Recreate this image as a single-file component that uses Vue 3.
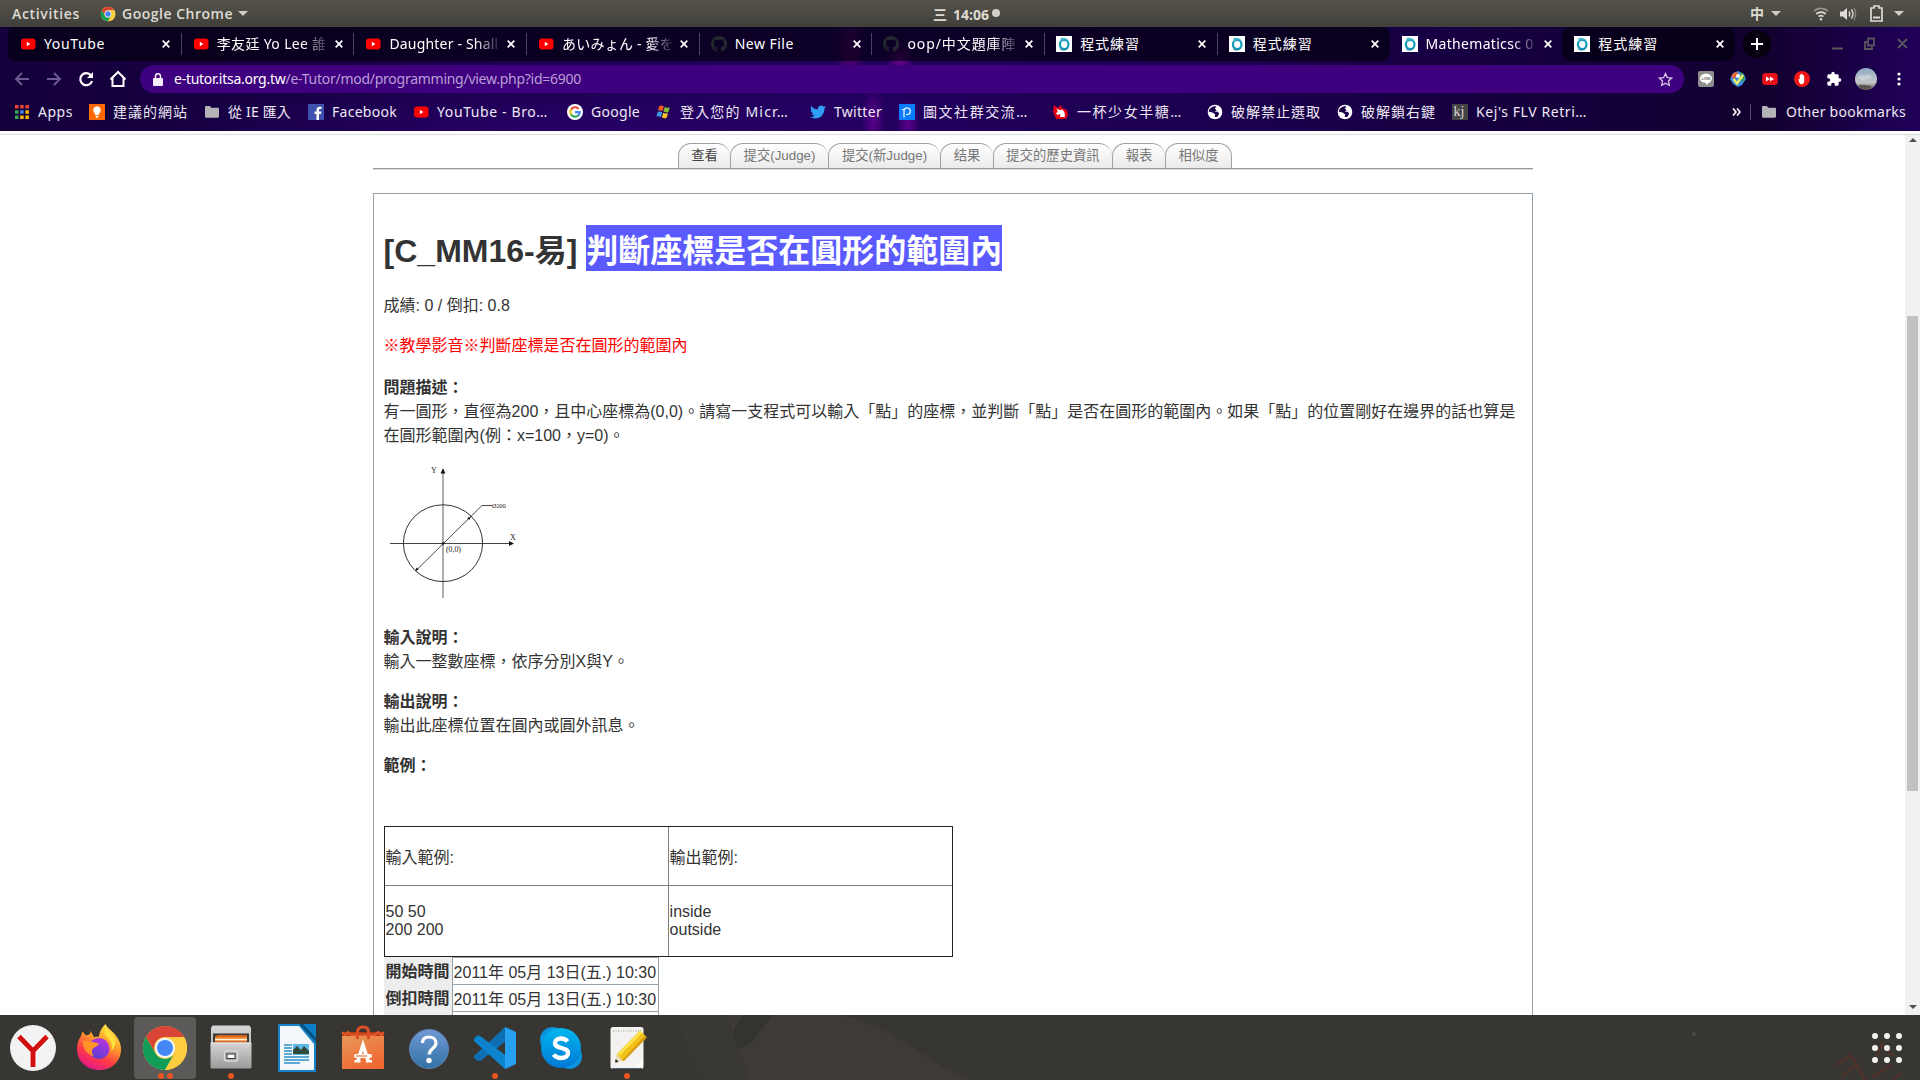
<script setup>
// Spreads or tightens the letters of a label so that it takes the given width.
const vFit = {
  mounted(el, { value }) {
    if (!value) return
    const natural = el.getBoundingClientRect().width
    const count = [...el.textContent].length
    el.style.letterSpacing = (value - natural) / count + 'px'
  },
}

const tabs = [
  { icon: 'youtube', title: 'YouTube', fit: 61 },
  { icon: 'youtube', title: '李友廷 Yo Lee 誰', fit: 110, fade: true },
  { icon: 'youtube', title: 'Daughter - Shall', fit: 109, fade: true },
  { icon: 'youtube', title: 'あいみょん - 愛を', fit: 112, fade: true },
  { icon: 'github', title: 'New File', fit: 59 },
  { icon: 'github', title: 'oop/中文題庫陣', fit: 109, fade: true },
  { icon: 'itsa', title: '程式練習', fit: 60 },
  { icon: 'itsa', title: '程式練習', fit: 60 },
  { icon: 'itsa', title: 'Mathematicsc 0', fit: 108, fade: true, active: true },
  { icon: 'itsa', title: '程式練習', fit: 60 },
]

const bookmarks = [
  { icon: 'apps', title: 'Apps', fit: 35, width: 75 },
  { icon: 'bulb', title: '建議的網站', fit: 75, width: 115 },
  { icon: 'folder', title: '從 IE 匯入', fit: 63, width: 104 },
  { icon: 'facebook', title: 'Facebook', fit: 65, width: 105 },
  { icon: 'youtube', title: 'YouTube - Bro…', fit: 111, width: 154 },
  { icon: 'google', title: 'Google', fit: 49, width: 89 },
  { icon: 'windows', title: '登入您的 Micr…', fit: 109, width: 154 },
  { icon: 'twitter', title: 'Twitter', fit: 48, width: 89 },
  { icon: 'pixnet', title: '圖文社群交流…', fit: 106, width: 154 },
  { icon: 'unicorn', title: '一杯少女半糖…', fit: 106, width: 154 },
  { icon: 'globe', title: '破解禁止選取', fit: 90, width: 130 },
  { icon: 'globe', title: '破解鎖右鍵', fit: 75, width: 115 },
  { icon: 'kj', title: "Kej's FLV Retri…", fit: 111, width: 134 },
]

const pageTabs = [
  { title: '查看', width: 52, current: true },
  { title: '提交(Judge)', width: 98 },
  { title: '提交(新Judge)', width: 112 },
  { title: '结果', width: 53 },
  { title: '提交的歷史資訊', width: 119 },
  { title: '報表', width: 53 },
  { title: '相似度', width: 67 },
]

const dock = [
  { name: 'yandex', dots: 0 },
  { name: 'firefox', dots: 0 },
  { name: 'chrome', dots: 2, active: true },
  { name: 'files', dots: 1 },
  { name: 'writer', dots: 0 },
  { name: 'software', dots: 0 },
  { name: 'help', dots: 0 },
  { name: 'vscode', dots: 1 },
  { name: 'skype', dots: 0 },
  { name: 'notes', dots: 1 },
]
</script>

<template>
  <svg class="defs" width="0" height="0" aria-hidden="true">
    <defs>
      <linearGradient id="ffBody" x1="0.8" y1="0" x2="0.3" y2="1">
        <stop offset="0" stop-color="#fff04a" /><stop offset="0.4" stop-color="#ff9a28" />
        <stop offset="0.7" stop-color="#ff3b47" /><stop offset="1" stop-color="#e3158c" />
      </linearGradient>
      <linearGradient id="ffCore" x1="0.7" y1="0" x2="0.3" y2="1">
        <stop offset="0" stop-color="#b833e1" /><stop offset="1" stop-color="#5a3fd0" />
      </linearGradient>
      <linearGradient id="metal" x1="0" y1="0" x2="0" y2="1">
        <stop offset="0" stop-color="#d6d6d6" /><stop offset="1" stop-color="#9b9b9b" />
      </linearGradient>
      <linearGradient id="bag" x1="0" y1="0" x2="0.5" y2="1">
        <stop offset="0" stop-color="#e8975a" /><stop offset="1" stop-color="#f06a32" />
      </linearGradient>
      <linearGradient id="helpBlue" x1="0" y1="0" x2="0" y2="1">
        <stop offset="0" stop-color="#7098d4" /><stop offset="1" stop-color="#3372a6" />
      </linearGradient>
      <linearGradient id="skypeBlue" x1="0" y1="0" x2="0" y2="1">
        <stop offset="0" stop-color="#00b7f0" /><stop offset="1" stop-color="#0078d4" />
      </linearGradient>
      <linearGradient id="sky" x1="0" y1="0" x2="0" y2="1">
        <stop offset="0" stop-color="#8fa9c4" /><stop offset="0.65" stop-color="#c3c7c9" /><stop offset="1" stop-color="#5e554c" />
      </linearGradient>

      <symbol id="youtube" viewBox="0 0 16 16">
        <rect x="1" y="2.500" width="14.500" height="11" rx="3" fill="#f00" /><path d="M6.800 5.800v4.400L10.400 8z" fill="#fff" />
      </symbol>
      <symbol id="github" viewBox="0 0 16 16">
        <path fill="#24292e" d="M8 0C3.58 0 0 3.58 0 8c0 3.54 2.29 6.53 5.47 7.59.4.07.55-.17.55-.38v-1.49c-2.01.37-2.53-.49-2.69-.94-.09-.23-.48-.94-.82-1.13-.28-.15-.68-.52-.01-.53.63-.01 1.08.58 1.23.82.72 1.21 1.87.87 2.33.66.07-.52.28-.87.51-1.07-1.78-.2-3.64-.89-3.64-3.95 0-.87.31-1.59.82-2.15-.08-.2-.36-1.02.08-2.12 0 0 .67-.21 2.2.82.64-.18 1.32-.27 2-.27s1.36.09 2 .27c1.53-1.04 2.2-.82 2.2-.82.44 1.1.16 1.92.08 2.12.51.56.82 1.27.82 2.15 0 3.07-1.87 3.75-3.65 3.95.29.25.54.73.54 1.48v2.2c0 .21.15.46.55.38A8.01 8.01 0 0 0 16 8c0-4.42-3.58-8-8-8z" />
      </symbol>
      <symbol id="itsa" viewBox="0 0 16 16">
        <rect width="16" height="16" fill="#fff" />
        <ellipse cx="8.200" cy="8.500" rx="4.300" ry="4.500" fill="none" stroke="#169aba" stroke-width="2.200" />
        <path d="M4.500 2.200C7 1 11 2 12.500 4.500L8 3.600 4.500 6z" fill="#43b6cc" /><path d="M4.200 13c2.600 1.900 6 1.100 7.600-.9" stroke="#0b7793" fill="none" />
      </symbol>
      <symbol id="apps" viewBox="0 0 16 16">
        <path fill="#ea4335" d="M1 1h3.500v3.500H1zM6.200 1h3.500v3.500H6.200zM11.400 1h3.500v3.500h-3.500z" />
        <path fill="#34a853" d="M1 6.200h3.500v3.500H1zM1 11.400h3.500v3.500H1z" /><path fill="#4285f4" d="M6.200 6.200h3.500v3.500H6.200z" />
        <path fill="#fbbc05" d="M11.400 6.200h3.500v3.500h-3.500zM6.200 11.400h3.500v3.500H6.200zM11.400 11.400h3.500v3.500h-3.500z" />
      </symbol>
      <symbol id="bulb" viewBox="0 0 16 16">
        <rect width="16" height="16" fill="#ff6a00" /><path d="M8 2.200a4 4 0 0 0-2.200 7.200l.6 1.600h3.200l.6-1.600A4 4 0 0 0 8 2.200zM6.600 11.800h2.800v1L8 14.300l-1.400-1.500z" fill="#fff" />
      </symbol>
      <symbol id="folder" viewBox="0 0 16 16">
        <path d="M1 3.200C1 2.500 1.500 2 2.200 2h3.600l1.600 1.800h6.400c.7 0 1.200.5 1.200 1.200v7.600c0 .7-.5 1.200-1.200 1.200H2.200c-.7 0-1.200-.5-1.200-1.200z" fill="#b4b4b8" />
      </symbol>
      <symbol id="facebook" viewBox="0 0 16 16">
        <rect width="16" height="16" fill="#4052b0" /><path d="M11 16v-6h2l.4-2.400H11V6.200c0-.7.3-1.200 1.300-1.200h1.200V2.800c-2.900-.5-5 .3-5 3.100v1.700H6.500V10h2v6z" fill="#fff" />
      </symbol>
      <symbol id="google" viewBox="0 0 16 16">
        <circle cx="8" cy="8" r="8" fill="#fff" />
        <g fill="none" stroke-width="2.100"><path d="M11.600 4.900A4.700 4.700 0 0 0 4 5.600" stroke="#ea4335" /><path d="M4 5.600a4.700 4.700 0 0 0 0 4.800" stroke="#fbbc05" />
          <path d="M4 10.400a4.700 4.700 0 0 0 7 1.200" stroke="#34a853" /><path d="M11 11.600A4.700 4.700 0 0 0 12.700 8.100H8" stroke="#4285f4" /></g>
      </symbol>
      <symbol id="windows" viewBox="0 0 16 16">
        <path d="M3.200 2.200C5 1.200 6.400 1.600 7.800 2.500L6.500 7.200C5 6.300 3.600 6 1.900 6.900z" fill="#f25a22" />
        <path d="M8.800 3c1.500.8 3 1.100 5 .2l-1.400 4.700c-1.800.9-3.300.6-4.900-.3z" fill="#86c431" />
        <path d="M1.700 8c1.700-.9 3.200-.6 4.600.3L5 13c-1.500-.9-3-1.200-4.700-.4z" fill="#3f9ae8" />
        <path d="M7.200 8.800c1.500.8 3 1.200 4.900.3l-1.400 4.700c-1.700.9-3.300.6-4.800-.3z" fill="#fcc419" />
      </symbol>
      <symbol id="twitter" viewBox="0 0 24 24">
        <path fill="#2f9df4" d="M23.950 4.570a10 10 0 0 1-2.820.780 4.960 4.960 0 0 0 2.160-2.730c-.950.560-2 .960-3.120 1.190a4.920 4.920 0 0 0-8.390 4.480C7.690 8.100 4.070 6.130 1.640 3.160a4.820 4.820 0 0 0-.670 2.480c0 1.710.870 3.210 2.190 4.100a4.900 4.900 0 0 1-2.230-.620v.060a4.920 4.920 0 0 0 3.950 4.830 5 5 0 0 1-2.210.080 4.940 4.940 0 0 0 4.600 3.420A9.870 9.870 0 0 1 0 19.540a14 14 0 0 0 7.550 2.210c9.050 0 14-7.500 14-13.980l-.020-.640a9.940 9.940 0 0 0 2.420-2.560z" />
      </symbol>
      <symbol id="pixnet" viewBox="0 0 16 16">
        <rect width="16" height="16" fill="#0a7cff" /><path d="M3 5.500h2v8M5 10.500V6a3.300 3.300 0 1 1 3.300 4.500H7" fill="none" stroke="#fff" stroke-width="1.200" />
      </symbol>
      <symbol id="unicorn" viewBox="0 0 16 16">
        <path d="M1 1l4 3 3-3 1 3 5 2 1 5-2 4H3L2 12 0 8z" fill="#e60012" /><path d="M3.500 4.500l3 1.500 3-.5 2 3 .5 4.500H7l.5-3-3 1L3 9.500l1.800-2z" fill="#fff" />
      </symbol>
      <symbol id="globe" viewBox="0 0 16 16">
        <circle cx="8" cy="8" r="7.300" fill="#fff" /><path d="M4 3.800c1.500-1.600 4-2 5.500-1.300L7.800 4.600l1.800 1.600-2 1.500h3.200l1.400 2-2 3.300H7.800l.4-2.600L5.600 8.600l-3.800-.8c0-1.500.8-3 2.200-4z" fill="#1b0049" />
      </symbol>
      <symbol id="kj" viewBox="0 0 16 16"><rect width="16" height="16" fill="#444" /><text x="1.500" y="12" fill="#ddd" font-family="Liberation Serif, serif" font-size="14">kj</text></symbol>

      <symbol id="chrome" viewBox="0 0 48 48">
        <circle cx="24" cy="24" r="22" fill="#fbcb3e" />
        <path d="M4.950 13A22 22 0 0 1 43.050 13H24a11 11 0 0 0-9.500 16.500z" fill="#da4437" />
        <path d="M4.950 13A22 22 0 0 0 24 46l9.500-16.500a11 11 0 0 1-19 0z" fill="#109d58" />
        <path d="M43.050 13A22 22 0 0 1 24 46l9.500-16.500A11 11 0 0 0 24 13z" fill="#fecd40" />
        <circle cx="24" cy="24" r="10.200" fill="#f4f4f4" /><circle cx="24" cy="24" r="8" fill="#4487f4" />
      </symbol>
      <symbol id="yandex" viewBox="0 0 48 48">
        <circle cx="24" cy="24" r="23" fill="#f2f2f2" />
        <path d="M10 12.500L24 27 38 12.500M24 26v17" fill="none" stroke="#fff" stroke-width="7.500" />
        <path d="M10 12.500L24 27 38 12.500M24 26v17" fill="none" stroke="#d0100f" stroke-width="5" />
      </symbol>
      <symbol id="firefox" viewBox="0 0 48 48">
        <path d="M30.500 0c1.500 4 7 7 10 11 4 5 5.500 9.500 5.500 14.500C46 37.500 36.500 46 24.500 46S2 37.500 2 25c0-5 1.500-9.500 4-13l1.500-4.500 3.500 4 4-1.500.5-3 3.500 6 5-.5c0-4 2.500-8.500 6.500-12.500z" fill="url(#ffBody)" />
        <circle cx="24" cy="24.500" r="10.500" fill="url(#ffCore)" />
        <path d="M8 17c4-1 6.500 1 9.500 1 3.500 0 5 1 6.500 2-1 2-4 2.500-6 4.500-1.200 1.500-2 4.500 1 7.500-7-1-11-7-11-15z" fill="#ff9326" />
        <path d="M31 2c-3 6 0 10 3 13 3 3 3.500 8 2 12 4-3 5-8 4-12-2-5-8-7-9-13z" fill="#ffe03e" />
      </symbol>
      <symbol id="files" viewBox="0 0 48 48">
        <path d="M4 4l1.500-2.500h37L44 4v40.500H4z" fill="url(#metal)" /><rect x="6" y="9.500" width="36" height="12" fill="#3a3836" />
        <path d="M8 12.500l3-1.500h29v10H8z" fill="#d9641c" /><path d="M8 13.500h32v1.500H8z" fill="#f6a04a" /><path d="M8 15h32v1.500H8z" fill="#fff1dc" />
        <path d="M3.500 18.500h41v25.500h-41z" fill="url(#metal)" /><path d="M4 19h40" stroke="#e5e5e5" />
        <rect x="17.500" y="27" width="13" height="10" rx="2" fill="#aaa" stroke="#d8d8d8" stroke-width="1.500" /><rect x="20" y="30" width="8" height="4.500" fill="#fff" stroke="#333" />
      </symbol>
      <symbol id="writer" viewBox="0 0 48 48">
        <path d="M5 0h25l13 18v30H5z" fill="#1683c8" /><path d="M7 2h19l15 18v26H7z" fill="#f3f7f9" />
        <path d="M28 0h15v15z" fill="#0c80c6" /><path d="M26 0l17 18v-4L30 0z" fill="#084f7c" />
        <path d="M11 21h8M11 24h8M11 27h8M11 30h8M11 33h25M11 36h25M11 39h16" stroke="#2c91ca" stroke-width="1.500" />
        <rect x="20" y="20" width="16" height="11" fill="#5db8ea" /><path d="M20 30v-4l4-4 4 4 3-4 5 5v3z" fill="#30493a" />
      </symbol>
      <symbol id="software" viewBox="0 0 48 48">
        <path d="M3 8h42v10H3z" fill="#b93d15" /><path d="M3 8l3 3 3-3 3 3h24l3-3 3 3 3-3" fill="none" stroke="#e0562c" stroke-width="2" />
        <path d="M3 12h42v33H3z" fill="url(#bag)" /><path d="M18.500 15V8c0-3 1.500-5 5.500-5s5.500 2 5.500 5v7" fill="none" stroke="#dc4e24" stroke-width="3" />
        <path d="M18.500 38L24 21l5.500 17" fill="none" stroke="#fff" stroke-width="3.600" /><path d="M15.500 36h6v2.500h-6zM27 36h6v2.500h-6z" fill="#fff" /><rect x="15" y="30" width="18" height="4" rx="2" fill="#fff" /><path d="M17 32h11" stroke="#e8703a" stroke-width="1.200" />
      </symbol>
      <symbol id="help" viewBox="0 0 48 48">
        <circle cx="24" cy="25" r="19.500" fill="url(#helpBlue)" stroke="#5d83b4" />
        <path d="M17.500 19c0-4 2.500-6 6.500-6s7 2.300 7 6c0 5.500-6.800 5.500-6.800 11.500" fill="none" stroke="#fff" stroke-width="3.200" /><circle cx="24" cy="36.500" r="2.700" fill="#fff" />
      </symbol>
      <symbol id="vscode" viewBox="0 0 48 48">
        <path d="M34 3L3 32v2l4 3 3-.5L34 18z" fill="#0f6fb5" /><path d="M34 45L3 17v-2l4-3 3 .5L34 31z" fill="#0a86d0" />
        <path d="M34 3l11 5v32l-11 5z" fill="#27a0f0" /><path d="M3 14.500l4-3.500 27 21v13z" fill="#0d83cd" />
      </symbol>
      <symbol id="skype" viewBox="0 0 48 48">
        <circle cx="15.500" cy="15.500" r="12.500" fill="#0b94dd" /><circle cx="32.500" cy="32.500" r="12.500" fill="#0b94dd" /><circle cx="24" cy="24" r="20" fill="url(#skypeBlue)" />
        <path d="M30.500 17.500c-1.500-2-3.500-3-6.500-3-3.500 0-6 1.600-6 4.500 0 6.500 13 3.500 13 10 0 3-2.700 5-7 5-3.200 0-5.700-1.200-7.300-3.500" fill="none" stroke="#fff" stroke-width="4.400" />
      </symbol>
      <symbol id="notes" viewBox="0 0 48 48">
        <rect x="7.500" y="3" width="33" height="42" rx="2.500" fill="#f3f2f0" /><path d="M10 7h29" stroke="#999" stroke-dasharray="1 1.500" /><path d="M33 42.500l7-7v7z" fill="#fff" />
        <path d="M9 44.500h30" stroke="#4c6079" />
        <path d="M12 38l2-8L37 6.500l6.500 6.500L20 36.500z" fill="#f2c21b" /><path d="M14.500 30L37 6.500l2.300 2.300L16.500 32z" fill="#fbe24a" /><path d="M19 36.500L41.500 12l2.500 1.500L21 37z" fill="#d89a10" />
        <path d="M12 38l2-7.500 5.500 6z" fill="#eadbc2" /><path d="M12 38.500l.8-3.500 2.700 3z" fill="#222" />
      </symbol>
    </defs>
  </svg>

  <div class="desktop">
    <header class="topbar">
      <div class="side left">
        <b v-fit="68" class="activities">Activities</b>
        <svg class="tb-chrome" width="16" height="16"><use href="#chrome" /></svg>
        <b v-fit="111">Google Chrome</b><i class="caret"></i>
      </div>
      <div class="clock"><b>三</b><b v-fit="36" class="time">14:06</b><i class="dot"></i></div>
      <div class="side right">
        <b class="ime">中</b><i class="caret"></i>
        <svg class="wifi" width="16" height="14" viewBox="0 0 16 14" fill="none" stroke="#dedcd6" stroke-width="1.700">
          <path d="M1 4.200a10 10 0 0 1 14 0" opacity=".5" /><path d="M3.300 7a7 7 0 0 1 9.400 0" /><path d="M5.600 9.600a3.600 3.600 0 0 1 4.800 0" /><circle cx="8" cy="12.200" r="1.200" fill="#dedcd6" stroke="none" />
        </svg>
        <svg class="volume" width="17" height="14" viewBox="0 0 17 14"><path d="M0 4.500h3L7 1v12L3 9.500H0z" fill="#dedcd6" /><path d="M9 4.500c1 1.500 1 3.500 0 5M11.300 2.500c2 2.600 2 6.400 0 9" fill="none" stroke="#dedcd6" stroke-width="1.400" /><path d="M13.800 1c2.500 3.500 2.500 8.500 0 12" stroke="#8b8981" fill="none" stroke-width="1.300" /></svg>
        <svg class="battery" width="13" height="17" viewBox="0 0 13 17"><path d="M4 1h5v2h3v13H1V3h3z" fill="none" stroke="#dedcd6" stroke-width="1.700" /><path d="M3 12.500h7" stroke="#dedcd6" stroke-width="2" /></svg>
        <i class="caret"></i>
      </div>
    </header>

    <section class="chrome">
      <div class="tabstrip">
        <div v-for="(t, i) in tabs" :key="i" class="tab" :class="{ active: t.active }">
          <svg class="fav" width="16" height="16"><use :href="'#' + t.icon" /></svg>
          <span class="tab-title" :class="{ fade: t.fade }"><span v-fit="t.fit">{{ t.title }}</span></span>
          <svg class="close" width="8" height="8" viewBox="0 0 8 8"><path d="M.7.7l6.600 6.600M7.300.7L.7 7.300" stroke="#fff" stroke-width="1.700" /></svg>
        </div>
        <div class="newtab"><svg width="12" height="12" viewBox="0 0 12 12"><path d="M6 0v12M0 6h12" stroke="#fff" stroke-width="2" /></svg></div>
        <svg class="winctl" width="76" height="14" viewBox="0 0 76 14" fill="none" stroke="#5a565e" stroke-width="1.800">
          <path d="M0 11.500h11M36 1.500h6v7h-6zM35 5h-2v7h7v-2M66 2l9 9M75 2l-9 9" />
        </svg>
      </div>

      <div class="toolbar">
        <svg class="nav" width="112" height="18" viewBox="0 0 112 18" fill="none" stroke-width="1.900">
          <path d="M15 9H2M8 3L2 9l6 6M33 9h13M40 3l6 6-6 6" stroke="#6e5a92" />
          <path d="M77 5.500A6 6 0 1 0 78 11" stroke="#fff" stroke-width="2.200" /><path d="M79 2v6h-6z" fill="#fff" />
          <path d="M96.500 9.500L104 2l7.500 7.500M98.500 8v8h11V8" stroke="#fff" stroke-width="2" />
        </svg>
        <div class="omnibox">
          <svg width="10" height="13" viewBox="0 0 10 13"><rect y="5" width="10" height="8" rx="1" fill="#f1ecf8" /><path d="M2.500 5V3.200a2.500 2.500 0 0 1 5 0V5" fill="none" stroke="#f1ecf8" stroke-width="1.500" /></svg>
          <span v-fit="407" class="url"><em>e-tutor.itsa.org.tw</em>/e-Tutor/mod/programming/view.php?id=6900</span>
          <svg class="star" width="15" height="15" viewBox="0 0 24 24"><path d="M12 2.500l2.900 6.500 7.100.7-5.300 4.700 1.500 7L12 17.800l-6.200 3.600 1.500-7L2 9.700 9.100 9z" fill="none" stroke="#d8cbe8" stroke-width="2" /></svg>
        </div>
        <div class="exts">
          <svg width="16" height="16" viewBox="0 0 16 16"><rect width="16" height="16" rx="2" fill="#8e8e8e" /><path d="M8 2.800c3.400 0 6 2 6 4.600 0 2.400-3 4.700-6 6.300v-1.900c-3.400 0-6-1.800-6-4.400s2.600-4.600 6-4.600z" fill="#fff" /><text x="3.600" y="9" font-size="4" font-weight="700" font-family="Liberation Sans, sans-serif" fill="#777">LINE</text></svg>
          <svg width="16" height="16" viewBox="0 0 16 16"><path d="M8 0l6 3 2 5-4 6-4 2-5-3-3-5 3-6z" fill="#3a8fe0" /><path d="M1 5l4-4 4 1-5 6z" fill="#e7632f" /><path d="M11 1l4 5-2 5-3-4z" fill="#37a24a" /><path d="M3.500 8l3.500 4.500L13 4" fill="none" stroke="#eef06a" stroke-width="2.400" /><circle cx="8" cy="5" r="2" fill="#fff" /></svg>
          <svg width="16" height="16" viewBox="0 0 16 16"><rect x=".3" y="2" width="15.400" height="12" rx="3" fill="#e5121b" /><path d="M4 5.500v5L8 8zM8 5.500v5L12 8z" fill="#fff" /></svg>
          <svg width="16" height="16" viewBox="0 0 16 16"><circle cx="8" cy="8" r="8" fill="#f01616" /><path d="M4.500 8.500c0-1 1-1 1.200-.2V4.200c0-.8 1.100-.8 1.100 0V3.300c0-.8 1.100-.8 1.100 0v.5c0-.8 1.100-.8 1.100 0v1c0-.8 1.200-.8 1.200 0V10c0 2-1.200 3.300-2.800 3.300S5.600 12 5.100 11z" fill="#fff" /></svg>
          <svg width="16" height="16" viewBox="0 0 24 24"><path d="M20.500 11H19V7a2 2 0 0 0-2-2h-4V3.500a2.500 2.500 0 0 0-5 0V5H4a2 2 0 0 0-2 2v3.800h1.500a2.700 2.700 0 0 1 0 5.400H2V20a2 2 0 0 0 2 2h3.800v-1.500a2.700 2.700 0 0 1 5.400 0V22H17a2 2 0 0 0 2-2v-4h1.500a2.500 2.500 0 0 0 0-5z" fill="#fff" /></svg>
          <svg class="avatar" width="22" height="22" viewBox="0 0 22 22"><circle cx="11" cy="11" r="11" fill="url(#sky)" /><path d="M3 9c3-3 6 0 8-2s5 0 7 2c-3 3-6 1-9 3-3 1-4-1-6-3z" fill="#dde2e6" opacity=".5" /><path d="M3 18c3-2 4-1 6-1l8 1-2 2c-4 2-9 1-12-2z" fill="#4a453f" opacity=".8" /></svg>
          <svg class="menu" width="4" height="14" viewBox="0 0 4 14" fill="#fff"><circle cx="2" cy="2" r="1.600" /><circle cx="2" cy="7" r="1.600" /><circle cx="2" cy="12" r="1.600" /></svg>
        </div>
      </div>

      <div class="bookmarks">
        <div v-for="b in bookmarks" :key="b.title" class="bm" :style="{ width: b.width + 'px' }">
          <svg width="16" height="16"><use :href="'#' + b.icon" /></svg><span v-fit="b.fit">{{ b.title }}</span>
        </div>
        <div class="bm-end">
          <svg width="9" height="8" viewBox="0 0 9 8"><path d="M1 .5L4 4 1 7.500M5 .5L8 4 5 7.500" fill="none" stroke="#fff" stroke-width="1.600" /></svg>
          <i></i>
          <svg width="16" height="16"><use href="#folder" /></svg><span v-fit="120">Other bookmarks</span>
        </div>
      </div>
    </section>

    <main class="viewport" lang="zh-Hant">
      <div class="page">
        <nav class="ptabs">
          <a v-for="p in pageTabs" :key="p.title" :class="{ current: p.current }" :style="{ width: p.width + 'px' }">{{ p.title }}</a>
        </nav>
        <article class="box">
          <h1>[C_MM16-易] <mark>判斷座標是否在圓形的範圍內</mark></h1>
          <p>成績: 0 / 倒扣: 0.8</p>
          <p class="video">※教學影音※判斷座標是否在圓形的範圍內</p>
          <p><strong>問題描述：</strong><br />有一圓形，直徑為200，且中心座標為(0,0)。請寫一支程式可以輸入「點」的座標，並判斷「點」是否在圓形的範圍內。如果「點」的位置剛好在邊界的話也算是<br />在圓形範圍內(例：x=100，y=0)。</p>
          <svg class="figure" width="140" height="150" viewBox="0 0 140 150" fill="none" stroke="#333" stroke-width="1">
            <path d="M59 16v129" stroke="#999" stroke-width="1.600" /><path d="M6 90.500h120" stroke="#444" />
            <ellipse cx="59" cy="90.200" rx="39.600" ry="38.400" />
            <path d="M32 117.500L98 52.500h10" stroke-width=".9" />
            <g fill="#111" stroke="none"><path d="M59 15.500l2.500 5h-5zM130 90.500l-5-2.500v5zM31 118l1.700-3.500 2 2zM87 63.500l-1.700 3.600-2.200-2.100z" /><circle cx="59" cy="90.500" r="1.300" /></g>
            <g fill="#222" stroke="none" font-family="Liberation Serif, serif" font-size="8"><text x="47" y="19.500">Y</text><text x="126" y="86.500">X</text><text x="62" y="98.500" font-size="7.800">(0,0)</text><text x="108" y="54.500" font-size="6.200">Ø200</text></g>
          </svg>
          <p><strong>輸入說明：</strong><br />輸入一整數座標，依序分別X與Y。</p>
          <p><strong>輸出說明：</strong><br />輸出此座標位置在圓內或圓外訊息。</p>
          <p><strong>範例：</strong></p>
          <div class="sample">
            <div class="head">輸入範例:</div><div class="head">輸出範例:</div>
            <div class="io">50 50<br />200 200</div><div class="io">inside<br />outside</div>
          </div>
          <div class="times">
            <b>開始時間</b><span>2011年 05月 13日(五.) 10:30</span>
            <b>倒扣時間</b><span>2011年 05月 13日(五.) 10:30</span>
            <b></b><span></span>
          </div>
        </article>
      </div>
      <div class="scrollbar"><i class="up"></i><i class="thumb"></i><i class="down"></i></div>
    </main>

    <footer class="dock">
      <div v-for="d in dock" :key="d.name" class="app" :class="{ on: d.active }">
        <svg width="48" height="48"><use :href="'#' + d.name" /></svg>
        <span class="dots"><i v-for="n in d.dots" :key="n"></i></span>
      </div>
      <svg class="wallpaper" width="1300" height="65" viewBox="0 0 1300 65">
        <g transform="translate(60 0)">
          <path d="M47 0h113c62 14 90 52 130 65H70C60 40 55 25 47 0z" fill="#3e3a38" /><path d="M63 0h30C78 18 70 34 56 34c-6-10-2-22 7-34z" fill="#33332f" />
          <path d="M0 8c8 25 13 45 33 57h37C60 40 55 20 44 0H0z" fill="#3a3a37" opacity=".6" />
        </g>
        <circle cx="1074" cy="19" r="2" fill="#4c4b49" />
        <path d="M1217 50l14-10 14 25M1222 61l16-12M1254 47l8-18 11 12M1252 62l20-12M1273 64l8-6" stroke="#5b3026" stroke-width="3" fill="none" opacity=".6" />
      </svg>
      <div class="grid"><i v-for="n in 9" :key="n"></i></div>
    </footer>
  </div>
</template>

<style>
body { margin: 0; overflow: hidden; background: #fff; }
</style>

<style scoped>
* { box-sizing: border-box; }
.defs { position: absolute; }
.desktop { width: 1920px; height: 1080px; display: flex; flex-direction: column; overflow: hidden; font-family: "Noto Sans", "Noto Sans CJK TC", sans-serif; }
svg { display: block; flex: none; }
span, b { white-space: nowrap; }

.topbar { height: 27px; flex: none; display: flex; align-items: center; background: linear-gradient(#55534b, #403f3a); color: #dedbd2; font: 600 14px/27px "Open Sans", "Noto Sans CJK TC", sans-serif; }
.topbar b { font-weight: 600; }
.side { display: flex; align-items: center; width: 933px; }
.left { padding-left: 12px; }
.tb-chrome { margin: 0 6px 0 20px; }
.caret { width: 0; height: 0; border: 5px solid transparent; border-top-color: #cfccc4; border-bottom: 0; margin-left: 5px; }
.clock { display: flex; align-items: center; width: 72px; padding-top: 2px; }
.clock .time { margin-left: 6px; font-weight: 700; }
.dot { width: 8px; height: 8px; border-radius: 50%; background: #d3d0c9; margin: -4px 0 0 3px; }
.right { width: 915px; padding-left: 745px; }
.ime { width: 15px; margin-right: 1px; }
.wifi { margin-left: 32px; }
.volume { margin-left: 11px; }
.battery { margin-left: 13px; }
.battery + .caret { margin-left: 11px; }

.chrome { height: 104px; flex: none; color: #fff; font-size: 14px;
  background:
    radial-gradient(ellipse 15px 45px at 850px 20px, rgba(125, 0, 140, .6), transparent),
    radial-gradient(ellipse 14px 22px at 900px 34px, rgba(150, 0, 170, .6), transparent),
    radial-gradient(ellipse 12px 34px at 873px 92px, rgba(125, 0, 165, .6), transparent),
    radial-gradient(ellipse 12px 24px at 908px 96px, rgba(125, 0, 165, .6), transparent),
    radial-gradient(ellipse 380px 50px at 540px 104px, rgba(54, 0, 130, .45), transparent),
    linear-gradient(90deg, #14003a, #1a004c 25%, #23005f 44%, #1d0052 60%, #14003b 82%, #12002e 92%, #20005a); }
.tabstrip { height: 34px; display: flex; align-items: center; padding-left: 8px; }
.tab { width: 172.700px; height: 34px; display: flex; align-items: center; padding-left: 11px; background: rgba(3, 0, 14, .68); border-left: 1px solid #4b4068; border-image: linear-gradient(transparent 7px, #4b4068 7px, #4b4068 27px, transparent 27px) 1; }
.tab:first-child { border-radius: 8px 0 0 8px; border-image: none; border-color: transparent; }
.tab:nth-child(8) { border-radius: 0 8px 8px 0; }
.tab.active { background: none; border-image: none; border-color: transparent; }
.tab:nth-child(10) { border-image: none; border-color: transparent; border-radius: 8px; }
.tab-title { width: 113px; margin-left: 8px; overflow: hidden; line-height: 32px; }
.tab-title span { display: inline-block; }
.fade { -webkit-mask-image: linear-gradient(90deg, #000 76%, transparent); mask-image: linear-gradient(90deg, #000 76%, transparent); }
.close { margin-left: 5px; }
.newtab { width: 28px; height: 28px; border-radius: 50%; margin-left: 8px; background: #06000f; display: flex; align-items: center; justify-content: center; }
.winctl { margin-left: 61px; }

.toolbar { height: 36px; display: flex; align-items: center; padding-left: 14px; }
.omnibox { width: 1544px; height: 28px; border-radius: 14px; background: #3f007f; margin-left: 14px; display: flex; align-items: center; padding: 0 11px 0 13px; line-height: 28px; }
.url { margin-left: 11px; color: #b99fd8; display: inline-block; }
.url em { font-style: normal; color: #fff; }
.star { margin-left: auto; }
.exts { display: flex; align-items: center; gap: 16px; margin-left: 14px; }
.exts .avatar { margin: 0 0 0 -3px; }
.exts .menu { margin-left: 4px; }

.bookmarks { height: 34px; display: flex; align-items: center; padding: 0 0 5px 14px; color: #eee9f6; line-height: 28px; }
.bm, .bm-end { display: flex; align-items: center; gap: 8px; flex: none; }
.bm span, .bm-end span { display: inline-block; }
.bm-end { margin-left: 146px; gap: 9px; }
.bm-end i { width: 1px; height: 16px; background: #55477a; }
.bm-end svg + i { margin-right: 1px; }

.viewport { height: 884px; flex: none; display: flex; justify-content: space-between; background: #fff; overflow: hidden; box-shadow: inset 0 3px #fff, inset 0 4px #dcdce0; color: #333; font: 16px/24px "Liberation Sans", "Noto Sans CJK TC", sans-serif; }
.page { width: 1160px; margin-left: 373px; padding-top: 12px; }
.ptabs { height: 27px; display: flex; justify-content: center; border-bottom: 1px solid #ddd; box-shadow: inset 0 -1px #999; padding: 0 0 1px 4px; }
.ptabs a { height: 25px; flex: none; border: solid #a0a0a0; border-width: 1px 0 0 1px; border-radius: 13px 13px 0 0; background: linear-gradient(#fff, #eaeaea); font-size: 13.330px; line-height: 23px; text-align: center; color: #777; white-space: nowrap; }
.ptabs a:last-child { border-right-width: 1px; }
.ptabs a.current { color: #444; }
.box { margin-top: 23px; border: 1px solid #94a1aa; height: 900px; padding: 31px 10px 0 9.600px; }
h1 { font-size: 32px; line-height: 52px; height: 46px; margin: 0 0 23px; white-space: nowrap; }
mark { display: inline-block; vertical-align: top; height: 46px; line-height: 52px; background: #5a5aff; color: #fff; }
p { margin: 0 0 16px; }
.video { color: #f00; margin-bottom: 18px; }
.figure { margin: -11px 0 23px; }
.sample { width: 569px; height: 131px; margin-top: 48px; border: 1px solid #222; display: grid; grid-template: 59px 70px / 283px 284px; line-height: 18px; }
.sample div { border: 0 solid #808080; padding-left: 1px; }
.sample div:nth-child(even) { border-left-width: 1px; }
.sample .head { border-bottom-width: 1px; line-height: 62px; }
.io { padding-top: 17px; }
.times { display: grid; grid-template-columns: 68px 207px; grid-auto-rows: 27px; line-height: 30px; }
.times b { background: #ededed; text-align: right; padding-right: 2px; }
.times span { border: 1px solid #94a1aa; border-bottom: 0; padding-left: 1px; line-height: 29px; }
.scrollbar { width: 15px; margin-top: 4px; background: #f1f1f1; display: flex; flex-direction: column; align-items: center; padding: 3px 0 6px; }
.scrollbar .up, .scrollbar .down { border: 4px solid transparent; }
.scrollbar .up { border-top: 0; border-bottom-color: #505050; }
.scrollbar .down { border-bottom: 0; border-top-color: #505050; margin-top: auto; }
.thumb { width: 11px; height: 475px; margin-top: 174px; background: #c1c1c1; }

.dock { height: 65px; flex: none; background: #373633; display: flex; align-items: center; padding: 0 18px 0 2px; position: relative; gap: 4px; }
.app { width: 62px; height: 62px; border-radius: 4px; display: flex; flex-direction: column; align-items: center; padding-top: 7px; position: relative; z-index: 1; }
.app.on { background: #5c5a58; }
.dots { position: absolute; bottom: 0; display: flex; gap: 3px; }
.dots i { width: 6px; height: 6px; border-radius: 50%; background: #e95420; }
.wallpaper { position: absolute; left: 620px; top: 0; }
.grid { margin-left: auto; display: grid; grid-template-columns: repeat(3, 6px); gap: 6px; position: relative; }
.grid i { width: 6px; height: 6px; border-radius: 50%; background: #f2f2f2; }
</style>
